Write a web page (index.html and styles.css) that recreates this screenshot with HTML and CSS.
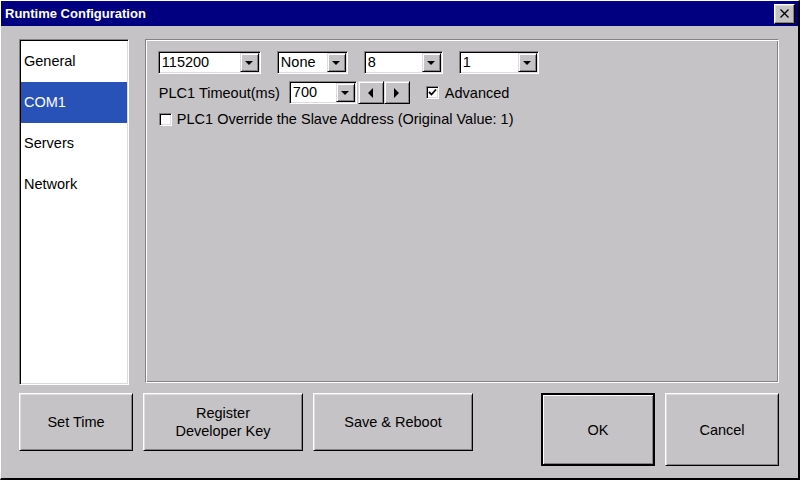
FILE: index.html
```html
<!DOCTYPE html>
<html>
<head>
<meta charset="utf-8">
<link rel="stylesheet" href="styles.css">
</head>
<body>
<div class="window">
  <div class="titlebar">
    <span class="title">Runtime Configuration</span>
    <div class="close">
      <svg width="9" height="9" viewBox="0 0 9 9"><path d="M0.5 0.5 L8.5 8.5 M8.5 0.5 L0.5 8.5" stroke="#000" stroke-width="1.3" fill="none"/></svg>
    </div>
  </div>
  <div class="client">
    <div class="main">
      <ul class="list">
        <li class="item">General</li>
        <li class="item selected">COM1</li>
        <li class="item">Servers</li>
        <li class="item">Network</li>
      </ul>
      <div class="panel">
        <div class="row row1">
          <div class="combo w1"><span class="val">115200</span><span class="drop"><i class="tri-down"></i></span></div>
          <div class="combo w2"><span class="val">None</span><span class="drop"><i class="tri-down"></i></span></div>
          <div class="combo w3"><span class="val">8</span><span class="drop"><i class="tri-down"></i></span></div>
          <div class="combo w4"><span class="val">1</span><span class="drop"><i class="tri-down"></i></span></div>
        </div>
        <div class="row row2">
          <span class="label tlabel">PLC1 Timeout(ms)</span>
          <div class="combo w5"><span class="val">700</span><span class="drop"><i class="tri-down"></i></span></div>
          <div class="spin">
            <span class="spinbtn"><i class="tri-left"></i></span>
            <span class="spinbtn"><i class="tri-right"></i></span>
          </div>
          <span class="check checked">
            <svg width="9" height="9" viewBox="0 0 9 9"><path d="M1 4 L3.5 6.5 L8 1.5" stroke="#000" stroke-width="1.8" fill="none"/></svg>
          </span>
          <span class="label adv">Advanced</span>
        </div>
        <div class="row row3">
          <span class="check"></span>
          <span class="label">PLC1 Override the Slave Address (Original Value: 1)</span>
        </div>
      </div>
    </div>
    <div class="buttons">
      <div class="btn-group">
        <div class="btn small">Set Time</div>
        <div class="btn wide">Register<br>Developer Key</div>
        <div class="btn wide">Save &amp; Reboot</div>
      </div>
      <div class="btn-group">
        <div class="btn big default">OK</div>
        <div class="btn big">Cancel</div>
      </div>
    </div>
  </div>
</div>
</body>
</html>
```

FILE: styles.css
```css
* { box-sizing: border-box; }
html, body { margin: 0; padding: 0; background: #c6c3c6; }
body { font-family: "Liberation Sans", Arial, sans-serif; font-size: 14.5px; color: #000; }

.window {
  width: 800px;
  height: 480px;
  background: #c6c3c6;
  border-top: 1px solid #ffffff;
  border-left: 1px solid #ffffff;
  border-right: 2px solid #000;
  border-bottom: 2px solid #000;
  display: flex;
  flex-direction: column;
}

.titlebar {
  height: 25px;
  background: #000080;
  display: flex;
  align-items: center;
  justify-content: space-between;
  padding: 0 3px 0 4px;
}
.title {
  color: #fff;
  font-weight: bold;
  font-size: 13px;
}
.close {
  width: 21px;
  height: 20px;
  background: #c6c3c6;
  border: 1px solid;
  border-color: #fff #000 #000 #fff;
  box-shadow: inset -1px -1px #848284, inset 1px 1px #dedbde;
  display: flex;
  align-items: center;
  justify-content: center;
}

.client {
  flex: 1;
  padding: 13px 19px 0 18px;
  display: flex;
  flex-direction: column;
}

.main {
  display: flex;
  height: 346px;
}

.list {
  list-style: none;
  margin: 0;
  padding: 1px 0 0 0;
  width: 110px;
  height: 346px;
  background: #fff;
  border: 1px solid;
  border-color: #848284 #fff #fff #848284;
  box-shadow: inset 1px 1px #000, inset -1px -1px #dedbde;
}
.item {
  height: 41px;
  line-height: 41px;
  padding-left: 3px;
  margin: 0 1px 0 1px;
}
.item.selected {
  background: #2952b8;
  color: #fff;
}

.panel {
  margin-left: 16px;
  width: 635px;
  height: 344px;
  border: 1px solid;
  border-color: #848284 #fff #fff #848284;
  box-shadow: inset 1px 1px #fff, inset -1px -1px #848284;
  padding: 11px 10px 0 12px;
  display: flex;
  flex-direction: column;
  gap: 7px;
}

.row { display: flex; align-items: center; }
.row1 { gap: 16px; }
.row2 { height: 23px; }
.row3 { height: 20px; margin-top: -2px; }

.tlabel { width: 131px; padding-left: 1px; }

.combo {
  height: 23px;
  background: #fff;
  border: 1px solid;
  border-color: #848284 #fff #fff #848284;
  box-shadow: inset 1px 1px #000, inset -1px -1px #dedbde;
  display: flex;
  align-items: center;
  justify-content: space-between;
  padding: 1px 1px 1px 2px;
}
.w1 { width: 103px; }
.w2 { width: 71px; }
.w3 { width: 79px; }
.w4 { width: 80px; }
.w5 { width: 68px; }

.val { padding-left: 1px; line-height: 19px; }
.drop {
  width: 19px;
  height: 19px;
  background: #c6c3c6;
  border: 1px solid;
  border-color: #dedbde #000 #000 #dedbde;
  box-shadow: inset 1px 1px #fff, inset -1px -1px #848284;
  display: flex;
  align-items: center;
  justify-content: center;
}
.tri-down {
  width: 0; height: 0;
  border-left: 4px solid transparent;
  border-right: 4px solid transparent;
  border-top: 4px solid #000;
  margin-top: 1px;
}

.spin { display: flex; margin-left: 1px; }
.spinbtn {
  width: 26px;
  height: 23px;
  background: #c6c3c6;
  border: 1px solid;
  border-color: #dedbde #000 #000 #dedbde;
  box-shadow: inset 1px 1px #fff, inset -1px -1px #848284;
  display: flex;
  align-items: center;
  justify-content: center;
}
.tri-left {
  width: 0; height: 0;
  border-top: 5px solid transparent;
  border-bottom: 5px solid transparent;
  border-right: 5px solid #000;
}
.tri-right {
  width: 0; height: 0;
  border-top: 5px solid transparent;
  border-bottom: 5px solid transparent;
  border-left: 5px solid #000;
}

.check {
  width: 13px;
  height: 13px;
  background: #fff;
  border: 1px solid;
  border-color: #848284 #fff #fff #848284;
  box-shadow: inset 1px 1px #000, inset -1px -1px #dedbde;
  display: flex;
  align-items: center;
  justify-content: center;
}
.row2 .check { margin-left: 16px; }
.adv { margin-left: 6px; }
.row3 .check { margin-left: 1px; }
.row3 .label { margin-left: 5px; }

.buttons {
  margin-top: 8px;
  display: flex;
  justify-content: space-between;
  align-items: flex-start;
}
.btn-group { display: flex; gap: 10px; align-items: flex-start; }
.btn {
  background: #c6c3c6;
  border: 1px solid;
  border-color: #fff #000 #000 #fff;
  box-shadow: inset 1px 1px #dedbde, inset -1px -1px #848284;
  display: flex;
  align-items: center;
  justify-content: center;
  text-align: center;
  line-height: 18px;
}
.btn.small { width: 114px; height: 58px; }
.btn.wide { width: 160px; height: 58px; }
.btn.big { width: 114px; height: 73px; }
.btn.default {
  border: 2px solid #000;
  box-shadow: inset 1px 1px #fff, inset -1px -1px #848284;
}
```
